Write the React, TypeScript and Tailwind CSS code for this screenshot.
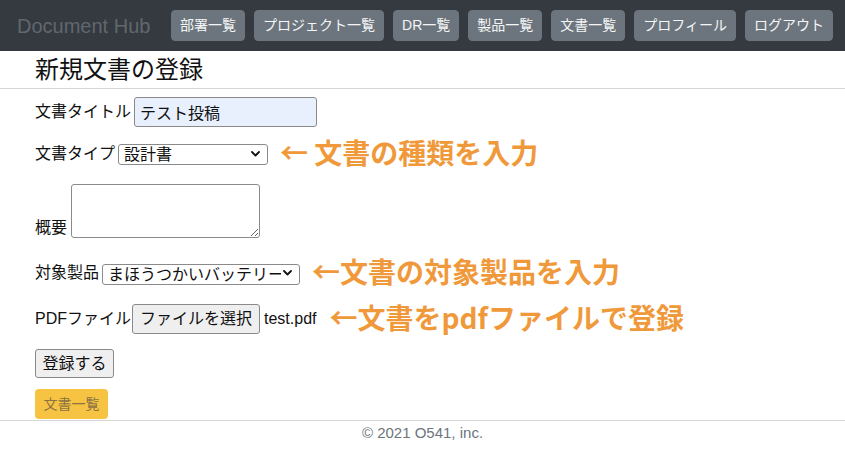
import React from 'react';

const NAV_ITEMS = ['部署一覧', 'プロジェクト一覧', 'DR一覧', '製品一覧', '文書一覧', 'プロフィール', 'ログアウト'];

const FONT = 'font-["Liberation_Sans","Noto_Sans_CJK_JP",sans-serif]';

function Chevron() {
    return (
        <svg
            className="pointer-events-none absolute right-[8px] top-1/2 -translate-y-1/2"
            width="9"
            height="6"
            viewBox="0 0 9 6"
            fill="none"
        >
            <path d="M1 1l3.5 3.5L8 1" stroke="#111" strokeWidth="1.8" strokeLinecap="round" strokeLinejoin="round" />
        </svg>
    );
}

function FakeSelect({ value, width }: { value: string; width: string }) {
    return (
        <div className={`relative h-[21px] ${width}`}>
            <select
                defaultValue={value}
                className={`h-full w-full appearance-none rounded-[3px] border border-[#8a8a8a] bg-white pl-[5px] pr-[18px] text-[16px] leading-[19px] text-[#111] outline-none ${FONT}`}
            >
                <option>{value}</option>
            </select>
            <Chevron />
        </div>
    );
}

function Note({ children }: { children: React.ReactNode }) {
    return (
        <span className='font-["Noto_Sans_CJK_JP",sans-serif] text-[28px] font-bold leading-[30px] text-[#f0993b]'>
            {children}
        </span>
    );
}

export default function App() {
    return (
        <div className={`h-[454px] w-[845px] overflow-hidden bg-white text-[16px] text-[#212529] ${FONT}`}>
            {/* Navbar */}
            <nav className="flex h-[51px] items-center bg-[#343a40] pl-[17px] pr-[12px]">
                <span className="text-[20px] leading-[30px] text-[#62676d]">Document Hub</span>
                <div className="ml-auto flex gap-[9px]">
                    {NAV_ITEMS.map(item => (
                        <span
                            key={item}
                            className="h-[31px] rounded-[4px] border border-[#6c757d] bg-[#6c757d] px-[8px] text-[14px] leading-[29px] text-[#f4f5f6]"
                        >
                            {item}
                        </span>
                    ))}
                </div>
            </nav>

            {/* Title */}
            <div className="h-[38px] border-b border-[#d6d6d6] px-[35px]">
                <h1 className="pt-[3px] text-[24px] font-normal leading-[32px] text-[#111]">新規文書の登録</h1>
            </div>

            {/* Form */}
            <div className="px-[35px] pt-[8px] text-[#111]">
                <div className="flex h-[30px] items-center gap-[3px]">
                    <span>文書タイトル</span>
                    <input
                        defaultValue="テスト投稿"
                        className={`h-[30px] w-[183px] rounded-[3px] border border-[#8a8a8a] bg-[#e8f0fe] px-[5px] text-[16px] text-[#111] outline-none ${FONT}`}
                    />
                </div>

                <div className="mt-[12px] flex h-[29px] items-center">
                    <span className="mr-[3px]">文書タイプ</span>
                    <FakeSelect value="設計書" width="w-[150px]" />
                    <span className="ml-[12px]">
                        <Note>← 文書の種類を入力</Note>
                    </span>
                </div>

                <div className="mt-[16px] flex h-[54px] items-end gap-[4px]">
                    <span className="leading-[20px]">概要</span>
                    <textarea className="h-[54px] w-[189px] rounded-[3px] border border-[#8a8a8a] bg-white outline-none" />
                </div>

                <div className="mt-[20px] flex h-[30px] items-center">
                    <span className="mr-[3px]">対象製品</span>
                    <FakeSelect value="まほうつかいバッテリー" width="w-[198px]" />
                    <span className="ml-[12px]">
                        <Note>←文書の対象製品を入力</Note>
                    </span>
                </div>

                <div className="mt-[16px] flex h-[30px] items-center">
                    <span className="mr-[1px]">PDFファイル</span>
                    <button className="h-[30px] w-[128px] rounded-[3px] border border-[#8a8a8a] bg-[#efefef] text-[16px] text-[#111]">
                        ファイルを選択
                    </button>
                    <span className="ml-[4px]">test.pdf</span>
                    <span className="ml-[13px]">
                        <Note>←文書をpdfファイルで登録</Note>
                    </span>
                </div>

                <div className="mt-[15px] flex">
                    <button className="h-[29px] w-[79px] rounded-[3px] border border-[#8a8a8a] bg-[#efefef] text-[16px] text-[#111]">
                        登録する
                    </button>
                </div>

                <div className="mt-[11px] flex">
                    <span className="h-[30px] w-[73px] rounded-[4px] bg-[#f6c343] text-center text-[14px] leading-[30px] text-[#8c7442]">
                        文書一覧
                    </span>
                </div>
            </div>

            {/* Footer */}
            <footer className="mt-[1px] border-t border-[#d6d6d6] text-center text-[15px] leading-[24px] text-[#6c757d]">
                © 2021 O541, inc.
            </footer>
        </div>
    );
}
